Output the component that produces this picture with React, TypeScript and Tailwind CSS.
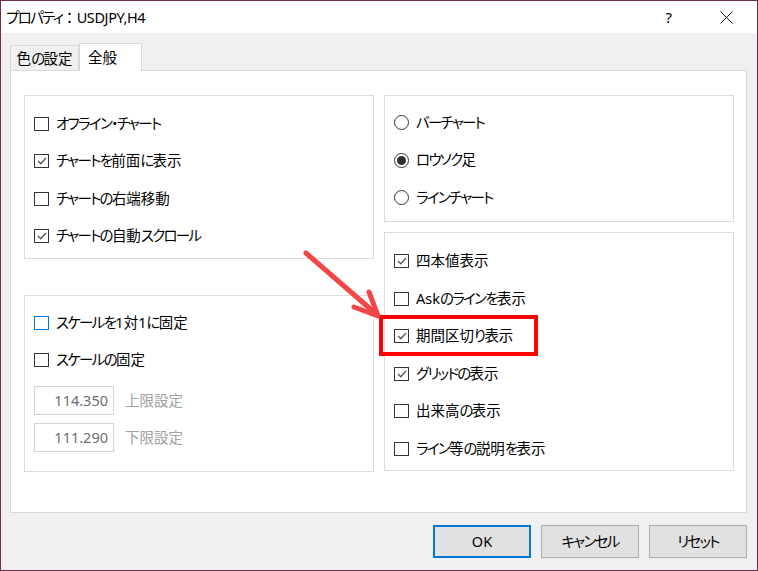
import React from "react";

const FONT = "font-['Noto_Sans','Noto_Sans_CJK_JP',sans-serif] [font-feature-settings:'palt']";

function T({ text }: { text: string }) {
  const parts = text.split(/([\u3040-\u30FF\u30FC\u30FB]+)/);
  return (
    <>
      {parts.map((p, i) =>
        /^[\u3040-\u30FF\u30FC\u30FB]+$/.test(p) ? (
          <span key={i} className="tracking-[-1.7px]">
            {p}
          </span>
        ) : p === "" ? null : (
          <span key={i}>{p}</span>
        )
      )}
    </>
  );
}

function Check({ checked, label, blue }: { checked?: boolean; label: string; blue?: boolean }) {
  return (
    <div className="h-[37.5px] flex items-center gap-[7px]">
      <div
        className={
          "w-[15px] h-[14px] border bg-white flex items-center justify-center shrink-0 " +
          (blue ? "border-[#0078d7]" : "border-[#333333]")
        }
      >
        {checked && (
          <svg width="12" height="12" viewBox="0 0 12 12">
            <polyline points="2,6 4.8,8.8 10,3" fill="none" stroke="#555555" strokeWidth="1.3" />
          </svg>
        )}
      </div>
      <span className="text-[14.5px] text-black leading-none mb-[2px]">
        <T text={label} />
      </span>
    </div>
  );
}

function Radio({ checked, label }: { checked?: boolean; label: string }) {
  return (
    <div className="h-[37.5px] flex items-center gap-[7px]">
      <div className="w-[15px] h-[15px] rounded-full border border-[#333333] bg-white flex items-center justify-center shrink-0">
        {checked && <div className="w-[9px] h-[9px] rounded-full bg-[#333333]" />}
      </div>
      <span className="text-[14.5px] text-black leading-none mb-[2px]">
        <T text={label} />
      </span>
    </div>
  );
}

function Field({ value, label }: { value: string; label: string }) {
  return (
    <div className="flex items-center gap-[11px]">
      <div className="w-[80px] h-[29px] border border-[#d4d4d4] bg-white flex items-center justify-end pr-[5px] text-[14.5px] text-[#6d6d6d] leading-none">
        <span className="mb-[1px]">{value}</span>
      </div>
      <span className="text-[14.5px] text-[#a0a0a0] leading-none mb-[1px]">{label}</span>
    </div>
  );
}

function Btn({ label, primary }: { label: string; primary?: boolean }) {
  return (
    <div
      className={
        "w-[98px] h-[33px] bg-[#e1e1e1] flex items-center justify-center text-[14.5px] text-black leading-none " +
        (primary ? "border-2 border-[#0078d7]" : "border border-[#adadad]")
      }
    >
      <span className="mb-[1px]">
        <T text={label} />
      </span>
    </div>
  );
}

export default function App() {
  return (
    <div className={"relative w-[758px] h-[571px] border border-[#6e2f4f] bg-[#f0f0f0] flex flex-col " + FONT}>
      {/* Title bar */}
      <div className="h-[32px] bg-white flex items-center pl-[5px] shrink-0">
        <span className="text-[14.5px] text-black leading-none">
          <span className="tracking-[-1.7px]">プロパティ</span>
          <span className="[font-feature-settings:normal]">：</span>
          <span className="tracking-[-0.4px]">USDJPY,H4</span>
        </span>
        <div className="flex-1" />
        <span className="text-[15px] text-black leading-none mr-[48px]">?</span>
        <svg width="13" height="13" viewBox="0 0 13 13" className="mr-[24px]">
          <line x1="0.5" y1="0.5" x2="12.5" y2="12.5" stroke="#111" strokeWidth="1" />
          <line x1="12.5" y1="0.5" x2="0.5" y2="12.5" stroke="#111" strokeWidth="1" />
        </svg>
      </div>

      {/* Body */}
      <div className="flex-1 flex flex-col pl-[9px] pr-[10px]">
        {/* Tabs */}
        <div className="mt-[10px] h-[27px] flex items-end">
          <div className="w-[69px] h-[25px] border border-b-0 border-[#d9d9d9] bg-[#f0f0f0] flex items-center justify-center text-[14.5px] text-black leading-none">
            <T text="色の設定" />
          </div>
          <div className="relative z-10 -mb-px w-[63px] h-[28px] border border-b-0 border-[#d9d9d9] bg-white flex items-center pl-[8px] text-[14.5px] text-black leading-none">
            全般
          </div>
        </div>

        {/* Panel */}
        <div className="h-[443px] border border-[#d9d9d9] bg-white pt-[24px] pl-[13px] flex gap-[10px]">
          {/* Left column */}
          <div className="w-[350px] flex flex-col gap-[36px]">
            <div className="h-[164px] border border-[#dcdcdc] pl-[9px] pt-[9px]">
              <Check label="オフライン・チャート" />
              <Check checked label="チャートを前面に表示" />
              <Check label="チャートの右端移動" />
              <Check checked label="チャートの自動スクロール" />
            </div>
            <div className="h-[177px] border border-[#dcdcdc] pl-[9px] pt-[8px]">
              <Check blue label="スケールを1対1に固定" />
              <Check label="スケールの固定" />
              <div className="mt-[7px] flex flex-col gap-[8px]">
                <Field value="114.350" label="上限設定" />
                <Field value="111.290" label="下限設定" />
              </div>
            </div>
          </div>

          {/* Right column */}
          <div className="w-[350px] flex flex-col gap-[10px]">
            <div className="h-[127px] border border-[#dcdcdc] pl-[9px] pt-[8px]">
              <Radio label="バーチャート" />
              <Radio checked label="ロウソク足" />
              <Radio label="ラインチャート" />
            </div>
            <div className="h-[239px] border border-[#dcdcdc] pl-[9px] pt-[9.5px]">
              <Check checked label="四本値表示" />
              <Check label="Askのラインを表示" />
              <Check checked label="期間区切り表示" />
              <Check checked label="グリッドの表示" />
              <Check label="出来高の表示" />
              <Check label="ライン等の説明を表示" />
            </div>
          </div>
        </div>

        {/* Buttons */}
        <div className="mt-[12px] flex justify-end gap-[10px]">
          <Btn primary label="OK" />
          <Btn label="キャンセル" />
          <Btn label="リセット" />
        </div>
      </div>

      {/* Annotation overlays */}
      <div className="absolute left-[378px] top-[314px] w-[159px] h-[41px] border-[4px] border-[#ff0000] pointer-events-none" />
      <svg className="absolute left-0 top-0 pointer-events-none" width="758" height="571" viewBox="0 0 758 571">
        <g stroke="#f44646" strokeWidth="5" strokeLinecap="round" strokeLinejoin="round" fill="none">
          <line x1="305" y1="252" x2="374" y2="312" />
          <polyline points="353,306 377,315 368,291" />
        </g>
      </svg>
    </div>
  );
}
